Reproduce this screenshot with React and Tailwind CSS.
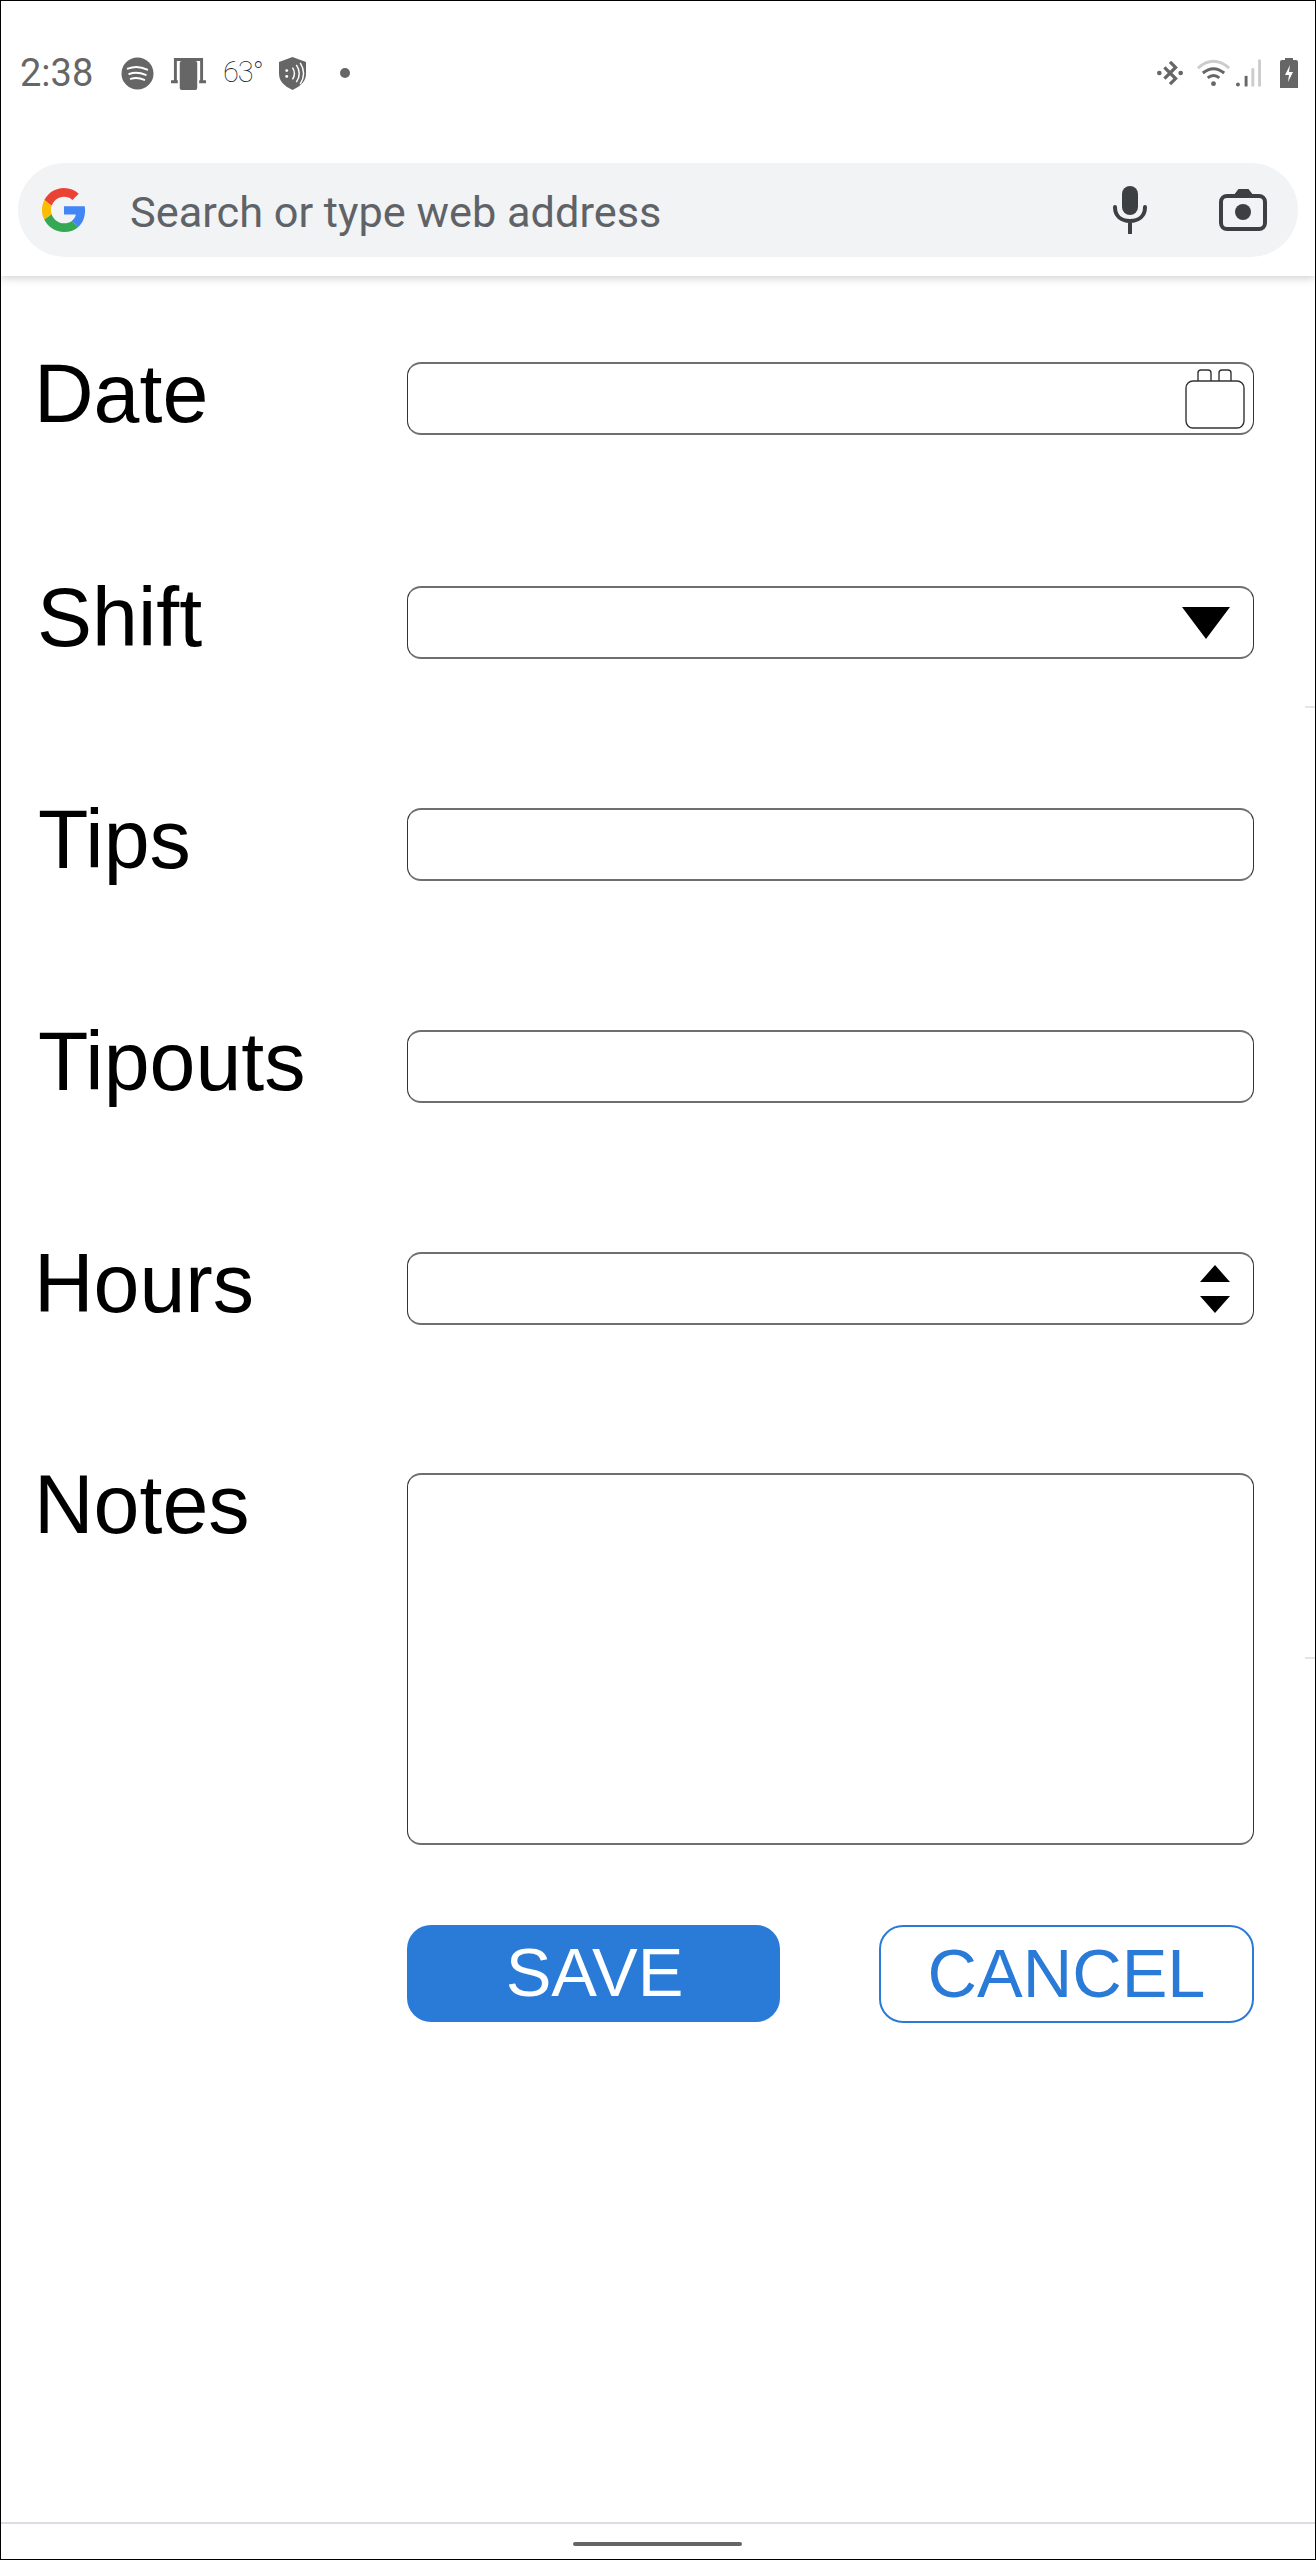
import React from "react";

const campos = [
  { label: "Date", tipo: "date", pos: "pl-[33px]", altura: "h-[224px]" },
  { label: "Shift", tipo: "select", pos: "pl-[36px]", altura: "h-[222px]" },
  { label: "Tips", tipo: "text", pos: "pl-[37px]", altura: "h-[222px]" },
  { label: "Tipouts", tipo: "text", pos: "pl-[37px]", altura: "h-[222px]" },
  { label: "Hours", tipo: "number", pos: "pl-[33px]", altura: "h-[221px]" },
];

const IconeData = () => (
  <svg width="60" height="60" viewBox="0 0 60 60" fill="none" stroke="#333" strokeWidth="1.4" className="mr-[8px]">
    <path d="M13 12V4q0-3 3-3h7q3 0 3 3v8M34 12V4q0-3 3-3h6q3 0 3 3v8" />
    <rect x="1" y="12" width="58" height="47" rx="7" />
  </svg>
);

const Seta = () => (
  <svg width="48" height="32" viewBox="0 0 48 32" className="mr-[23px]">
    <path d="M0 0h48L24 32z" fill="#000" />
  </svg>
);

const Setas = () => (
  <svg width="30" height="48" viewBox="0 0 30 48" className="mr-[23px]">
    <path d="M15 0l15 17H0zM0 31h30L15 48z" fill="#000" />
  </svg>
);

const Campo = ({ label, tipo, pos, altura }) => (
  <div className={`flex items-start ${altura}`}>
    <label className={`${pos} w-[406px] shrink-0 text-[82.5px] leading-[62px] text-black`}>{label}</label>
    <div className="flex h-[73px] w-[847px] items-center justify-end rounded-[14px] border-x border-y-2 border-x-[#333] border-y-[#6f6f6f] bg-white">
      {tipo === "date" && <IconeData />}
      {tipo === "select" && <Seta />}
      {tipo === "number" && <Setas />}
    </div>
  </div>
);

const StatusBar = () => (
  <div className="flex h-[162px] items-start justify-between pt-[54px] pl-[19px] pr-[17px] text-[#5f6368]">
    <div className="flex h-[36px] items-center">
      <span className="w-[101px] font-['Roboto',sans-serif] text-[38px] leading-[36px] text-[#666]">2:38</span>
      <svg width="33" height="33" viewBox="0 0 34 34">
        <circle cx="17" cy="17" r="16.500" fill="#666" />
        <path d="M7 12q10-4 20 1M8.500 17.500q8-3 17 1M10 22.500q7-2 14 1" fill="none" stroke="#fff" strokeWidth="2" strokeLinecap="round" />
      </svg>
      <svg width="35" height="33" viewBox="0 0 36 34" className="ml-[17px]">
        <path d="M3 1h30v23h-3V4H6v20H3zM0 24h7v3H0zM29 24h7v3h-7z" fill="#666" />
        <rect x="9" y="4" width="18" height="30" rx="2" fill="#666" />
      </svg>
      <span className="ml-[17px] w-[56px] font-['Roboto',sans-serif] text-[29px] font-thin tracking-[-1px] text-[#222]">63°</span>
      <svg width="27" height="33" viewBox="0 0 28 34">
        <path d="M14 0l14 5v12q0 11-14 17Q0 28 0 17V5z" fill="#666" />
        <path d="M14 11q4 6 0 12M18 8q6 9 0 18M22 6q7 11 0 22" fill="none" stroke="#fff" strokeWidth="1.500" />
        <circle cx="8" cy="14" r="1.500" fill="#fff" />
        <circle cx="8" cy="20" r="1.500" fill="#fff" />
      </svg>
      <span className="ml-[34px] h-[10px] w-[10px] rounded-full bg-[#666]" />
    </div>
    <div className="flex h-[36px] items-center">
      <svg width="26" height="28" viewBox="0 0 28 28" fill="none" stroke="#666" strokeWidth="3.500">
        <path d="M8 8l12 12-6 6M8 20L20 8l-6-6" />
        <circle cx="2.500" cy="14" r="2.500" fill="#666" stroke="none" />
        <circle cx="25.500" cy="14" r="2.500" fill="#666" stroke="none" />
      </svg>
      <svg width="33" height="28" viewBox="0 0 34 28" fill="none" strokeWidth="3" className="ml-[14px]">
        <path d="M1 9q16-14 32 0" stroke="#ccc" />
        <path d="M6 14q11-9 22 0M11 19q6-5 12 0" stroke="#666" />
        <circle cx="17" cy="25" r="2.500" fill="#666" />
      </svg>
      <svg width="25" height="28" viewBox="0 0 26 28" className="ml-[6px]">
        <circle cx="2" cy="26" r="2" fill="#666" />
        <rect x="9" y="17" width="3" height="11" fill="#666" />
        <rect x="16" y="9" width="3" height="19" fill="#ccc" />
        <rect x="23" y="0" width="3" height="28" fill="#ccc" />
      </svg>
      <svg width="18" height="30" viewBox="0 0 18 30" className="ml-[19px]">
        <path d="M5 2V0h8v2h3q2 0 2 2v26H0V4q0-2 2-2z" fill="#666" />
        <path d="M10 7l-5 10h4l-1 7 5-10H9z" fill="#fff" />
      </svg>
    </div>
  </div>
);

const BarraBusca = () => (
  <div className="mx-[17px] flex h-[94px] items-center rounded-full bg-[#f1f3f4] pl-[24px] pr-[31px]">
    <svg width="44" height="44" viewBox="0 0 48 48">
      <path fill="#EA4335" d="M24 9.500c3.540 0 6.710 1.220 9.210 3.600l6.850-6.850C35.900 2.380 30.470 0 24 0 14.620 0 6.510 5.380 2.560 13.220l7.980 6.190C12.430 13.720 17.740 9.500 24 9.500z" />
      <path fill="#4285F4" d="M46.980 24.550c0-1.570-.15-3.090-.38-4.550H24v9.020h12.940c-.58 2.960-2.260 5.480-4.780 7.180l7.730 6c4.510-4.180 7.090-10.360 7.090-17.650z" />
      <path fill="#FBBC05" d="M10.530 28.590c-.48-1.450-.76-2.990-.76-4.590s.27-3.140.76-4.590l-7.980-6.190C.92 16.460 0 20.120 0 24c0 3.880.92 7.540 2.560 10.780l7.970-6.190z" />
      <path fill="#34A853" d="M24 48c6.480 0 11.930-2.130 15.890-5.810l-7.730-6c-2.150 1.450-4.920 2.300-8.160 2.300-6.260 0-11.570-4.220-13.470-9.910l-7.980 6.190C6.510 42.620 14.620 48 24 48z" />
    </svg>
    <span className="ml-[44px] mt-[6px] font-['Roboto',sans-serif] text-[43.3px] text-[#5f6368]">Search or type web address</span>
    <div className="ml-auto flex items-center">
      <svg width="34" height="48" viewBox="0 0 34 48" fill="none">
        <rect x="9" y="0" width="16" height="29" rx="8" fill="#3c4043" />
        <path d="M2 21c0 9 6 14 15 14s15-5 15-14M17 35v12" stroke="#3c4043" strokeWidth="4" strokeLinecap="round" />
      </svg>
      <svg width="48" height="42" viewBox="0 0 48 42" fill="none" className="ml-[72px]">
        <path d="M16 6l4-5h9l4 5" fill="#3c4043" stroke="#3c4043" strokeWidth="2" />
        <rect x="2" y="7" width="44" height="33" rx="6" stroke="#3c4043" strokeWidth="4" />
        <circle cx="24" cy="23" r="8" fill="#3c4043" />
      </svg>
    </div>
  </div>
);

export default function App() {
  return (
    <main className="relative flex h-[2560px] flex-col overflow-hidden border border-black bg-white font-['Liberation_Sans',Arial,sans-serif]">
      <header className="h-[275px] shrink-0 bg-white shadow-[0_2px_8px_rgba(60,64,67,0.25)]">
        <StatusBar />
        <BarraBusca />
      </header>

      {/* marquinhas na borda direita */}
      <span className="absolute right-0 top-[705px] h-[2px] w-[10px] bg-[#e4e4ec]" />
      <span className="absolute right-0 top-[1656px] h-[2px] w-[10px] bg-[#e4e4ec]" />

      <section className="pt-[86px]">
        {campos.map((c) => (
          <Campo key={c.label} {...c} />
        ))}

        <div className="flex h-[452px] items-start">
          <label className="w-[406px] shrink-0 pl-[33px] text-[82.5px] leading-[62px] text-black">Notes</label>
          <div className="h-[372px] w-[847px] rounded-[14px] border-x border-y-2 border-x-[#333] border-y-[#6f6f6f] bg-white" />
        </div>

        <div className="ml-[406px] flex w-[847px] justify-between">
          <button className="h-[97px] w-[373px] rounded-[24px] bg-[#2a7ad8] pl-[2px] text-[68.5px] leading-none text-white">SAVE</button>
          <button className="h-[98px] w-[375px] rounded-[24px] border-2 border-[#2a7ad8] bg-white text-[68.5px] leading-none text-[#2a7ad8]">CANCEL</button>
        </div>
      </section>

      <footer className="mt-auto flex h-[37px] shrink-0 justify-start border-t-2 border-[#dcdce4]">
        <span className="ml-[572px] mt-[18px] h-[4px] w-[169px] rounded-full bg-[#666]" />
      </footer>
    </main>
  );
}
